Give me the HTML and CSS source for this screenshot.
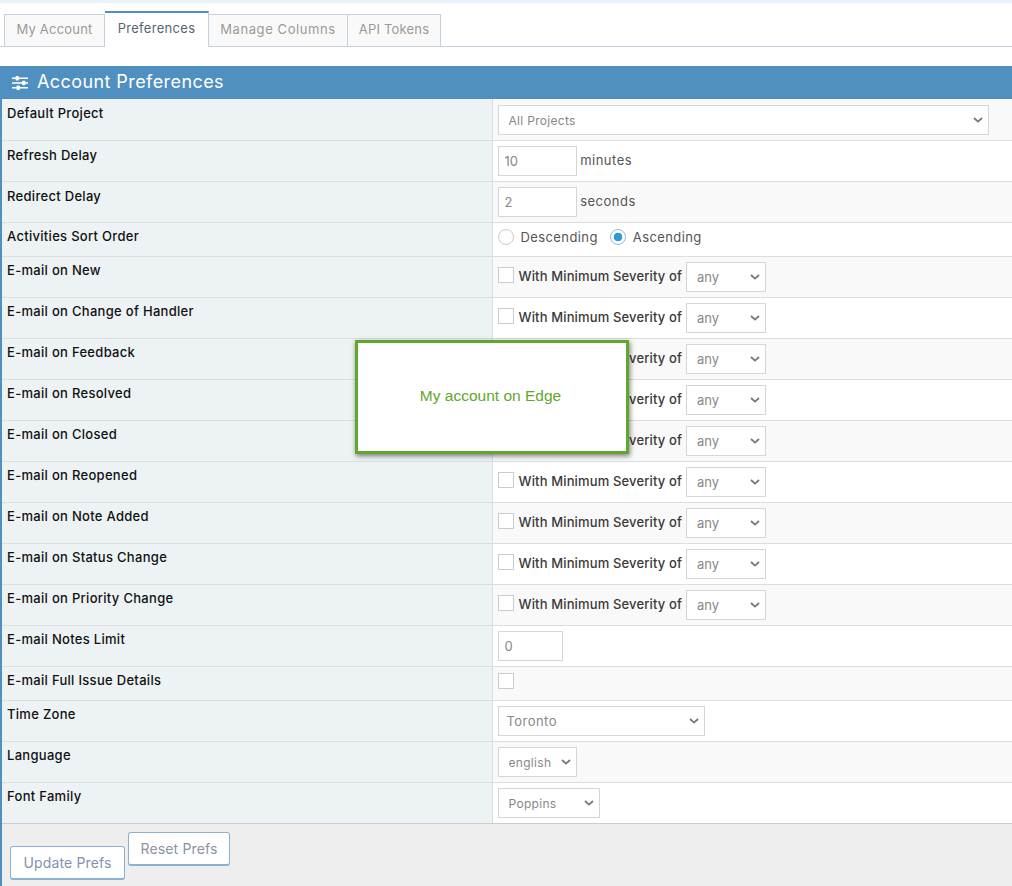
FILE: index.html
```html
<!DOCTYPE html>
<html lang="en">
<head>
    <meta charset="UTF-8">
    <meta name="viewport" content="width=device-width, initial-scale=1.0">
    <title>Account Preferences</title>
    <link rel="stylesheet" href="styles.css">
</head>
<body>
    <div class="top-strip"></div>

    <ul class="tabs">
        <li class="tab"><a href="#">My Account</a></li>
        <li class="tab active"><a href="#">Preferences</a></li>
        <li class="tab"><a href="#">Manage Columns</a></li>
        <li class="tab"><a href="#">API Tokens</a></li>
    </ul>

    <div class="widget">
        <h4 class="widget-title">
            <svg class="title-icon" width="16" height="14" viewBox="0 0 16 14">
                <path d="M0 1.5h16v1.6H0zM0 6.2h16v1.6H0zM0 10.9h16v1.6H0z" fill="#fff"/>
                <rect x="3.5" y="0" width="3.4" height="4.6" rx="1" fill="#fff"/>
                <rect x="10" y="4.7" width="3.4" height="4.6" rx="1" fill="#fff"/>
                <rect x="4.5" y="9.4" width="3.4" height="4.6" rx="1" fill="#fff"/>
            </svg>
            Account Preferences
        </h4>

        <table class="prefs">
            <tr class="first low">
                <th>Default Project</th>
                <td><select class="field wide"><option>All Projects</option></select></td>
            </tr>
            <tr class="low">
                <th>Refresh Delay</th>
                <td><input class="field num" type="text" value="10"> <span class="unit">minutes</span></td>
            </tr>
            <tr class="low">
                <th>Redirect Delay</th>
                <td><input class="field num" type="text" value="2"> <span class="unit">seconds</span></td>
            </tr>
            <tr class="short">
                <th>Activities Sort Order</th>
                <td class="radios">
                    <span class="radio"></span><span class="radio-label">Descending</span>
                    <span class="radio checked"></span><span class="radio-label">Ascending</span>
                </td>
            </tr>
            <tr>
                <th>E-mail on New</th>
                <td><span class="check"></span><b class="sev">With Minimum Severity of</b><select class="field any"><option>any</option></select></td>
            </tr>
            <tr>
                <th>E-mail on Change of Handler</th>
                <td><span class="check"></span><b class="sev">With Minimum Severity of</b><select class="field any"><option>any</option></select></td>
            </tr>
            <tr>
                <th>E-mail on Feedback</th>
                <td><span class="check"></span><b class="sev">With Minimum Severity of</b><select class="field any"><option>any</option></select></td>
            </tr>
            <tr>
                <th>E-mail on Resolved</th>
                <td><span class="check"></span><b class="sev">With Minimum Severity of</b><select class="field any"><option>any</option></select></td>
            </tr>
            <tr>
                <th>E-mail on Closed</th>
                <td><span class="check"></span><b class="sev">With Minimum Severity of</b><select class="field any"><option>any</option></select></td>
            </tr>
            <tr>
                <th>E-mail on Reopened</th>
                <td><span class="check"></span><b class="sev">With Minimum Severity of</b><select class="field any"><option>any</option></select></td>
            </tr>
            <tr>
                <th>E-mail on Note Added</th>
                <td><span class="check"></span><b class="sev">With Minimum Severity of</b><select class="field any"><option>any</option></select></td>
            </tr>
            <tr>
                <th>E-mail on Status Change</th>
                <td><span class="check"></span><b class="sev">With Minimum Severity of</b><select class="field any"><option>any</option></select></td>
            </tr>
            <tr>
                <th>E-mail on Priority Change</th>
                <td><span class="check"></span><b class="sev">With Minimum Severity of</b><select class="field any"><option>any</option></select></td>
            </tr>
            <tr>
                <th>E-mail Notes Limit</th>
                <td><input class="field limit" type="text" value="0"></td>
            </tr>
            <tr class="short">
                <th>E-mail Full Issue Details</th>
                <td><span class="check"></span></td>
            </tr>
            <tr>
                <th>Time Zone</th>
                <td><select class="field zone"><option>Toronto</option></select></td>
            </tr>
            <tr>
                <th>Language</th>
                <td><select class="field lang"><option>english</option></select></td>
            </tr>
            <tr>
                <th>Font Family</th>
                <td><select class="field font"><option>Poppins</option></select></td>
            </tr>
        </table>

        <div class="widget-footer">
            <button class="btn update">Update Prefs</button>
            <button class="btn reset">Reset Prefs</button>
        </div>
    </div>

    <div class="note">My account on Edge</div>
</body>
</html>
```

FILE: styles.css
```css
/* Global Styles */
html, body {
    margin: 0;
    padding: 0;
}

body {
    position: relative;
    height: 886px;
    overflow: hidden;
    background-color: #fff;
    font-family: 'Inter', 'Noto Sans', sans-serif;
    font-size: 13px;
    color: #393939;
}

.top-strip {
    height: 3px;
    background-color: #e8f4fa;
}

/* Tabs */
.tabs {
    display: flex;
    align-items: flex-end;
    height: 43px;
    margin: 0;
    padding: 0 0 0 4px;
    list-style: none;
    border-bottom: 1px solid #c5d0dc;
}

.tab {
    height: 33px;
    margin-bottom: -1px;
    background-color: #f9f9f9;
    border: 1px solid #c5d0dc;
    border-left: 0;
    box-sizing: border-box;
}

.tab:first-child {
    border-left: 1px solid #c5d0dc;
    width: 101px;
}

.tab:nth-child(2) { width: 104px; }
.tab:nth-child(3) { width: 139px; }
.tab:nth-child(4) { width: 93px; }

.tab a {
    display: block;
    line-height: 29px;
    text-align: center;
    color: #999;
    letter-spacing: 0.2px;
    text-decoration: none;
}

.tab:nth-child(3) a {
    letter-spacing: 0.6px;
}

.tab.active {
    height: 36px;
    background-color: #fff;
    border-top: 2px solid #4f8fc3;
    border-bottom-color: #fff;
}

.tab.active a {
    color: #576373;
    line-height: 31px;
    letter-spacing: 0.3px;
}

/* Widget */
.widget {
    margin-top: 19px;
    border-left: 2px solid #5090c1;
    box-sizing: border-box;
}

.widget-title {
    display: flex;
    align-items: center;
    gap: 9px;
    height: 33px;
    margin: 0 0 0 -1px;
    padding: 0 0 2px 11px;
    box-sizing: border-box;
    background-color: #5090c1;
    color: #fff;
    font-size: 18px;
    font-weight: 400;
    letter-spacing: 0.42px;
}

.title-icon {
    margin-top: 2px;
}

/* Preferences table */
.prefs {
    width: 100%;
    border-collapse: collapse;
    table-layout: fixed;
}

.prefs tr {
    height: 41px;
    border-bottom: 1px solid #ddd;
}

.prefs tr.short {
    height: 34px;
}

.prefs th {
    width: 490px;
    box-sizing: border-box;
    padding: 5px 5px 0;
    vertical-align: top;
    text-align: left;
    font-size: 13px;
    font-weight: 500;
    letter-spacing: 0.3px;
    color: #111;
    background-color: #edf3f4;
    border-right: 1px solid #ddd;
}

.prefs tr.low th {
    padding-top: 6px;
}

.prefs td {
    height: 40px;
    box-sizing: border-box;
    padding: 0 0 0 5px;
    white-space: nowrap;
}

.prefs tr.first td {
    padding-top: 2px;
}

.prefs tr.short td {
    height: 33px;
    padding-bottom: 2px;
}

.prefs tr.short td.radios {
    padding-bottom: 4px;
}

.prefs tr:nth-child(even) td {
    background-color: #fff;
}

.prefs tr:nth-child(odd) td {
    background-color: #f9f9f9;
}

.field {
    height: 30px;
    box-sizing: border-box;
    padding: 0 6px;
    border: 1px solid #d5d5d5;
    background-color: #fff;
    font-family: inherit;
    font-size: 12px;
    color: #888;
    vertical-align: middle;
}

select.field {
    appearance: none;
    -webkit-appearance: none;
    padding: 1px 0 0 10px;
    letter-spacing: 0.3px;
    background-image: url("data:image/svg+xml;utf8,<svg xmlns='http://www.w3.org/2000/svg' width='10' height='6'><path d='M1 1l4 3.6L9 1' fill='none' stroke='%23777' stroke-width='1.8'/></svg>");
    background-repeat: no-repeat;
    background-position: right 5px center;
}

.wide { width: 491px; }
.num { width: 79px; font-size: 13px; }
.limit { width: 65px; font-size: 13px; }
select.any { width: 80px; margin-left: 4px; font-size: 13px; letter-spacing: 0; }
select.zone { width: 207px; font-size: 13px; padding-left: 8px; letter-spacing: 0.45px; }
.lang { width: 79px; }
.font { width: 102px; }

.unit {
    color: #555;
    letter-spacing: 0.5px;
}

/* Radios and checks */
.radios {
    display: flex;
    align-items: center;
}

.radio {
    width: 16px;
    height: 16px;
    border: 1px solid #ccc;
    border-radius: 50%;
    box-sizing: border-box;
    background-color: #fff;
    margin-right: 7px;
}

.radio-label {
    margin-right: 12px;
    color: #555;
    letter-spacing: 0.4px;
}

.radio.checked {
    border-color: #9db8cc;
    background: radial-gradient(circle, #2d9bd2 0 4px, #fff 4.6px);
}

.check {
    display: inline-block;
    width: 16px;
    height: 16px;
    border: 1px solid #ccc;
    box-sizing: border-box;
    background-color: #fff;
    vertical-align: middle;
    position: relative;
    top: -2px;
}

.sev {
    margin-left: 5px;
    font-weight: 500;
    letter-spacing: 0.14px;
    color: #393939;
    vertical-align: middle;
    position: relative;
    top: -1px;
}

/* Footer buttons */
.widget-footer {
    display: flex;
    height: 63px;
    padding: 8px 0 0 8px;
    background-color: #eee;
    box-sizing: border-box;
    gap: 3px;
    border-top: 1px solid #ccc;
    margin-top: -1px;
}

.btn {
    height: 34px;
    padding: 0;
    background-color: #fff;
    border: 1px solid #8ab2d6;
    border-bottom-width: 2px;
    border-radius: 3px;
    font-family: inherit;
    font-size: 14px;
    letter-spacing: 0.15px;
    color: #7f93ad;
}

.update {
    width: 115px;
    margin-top: 14px;
}

.reset {
    width: 102px;
    color: #8a93a3;
}

/* Floating note */
.note {
    position: absolute;
    left: 355px;
    top: 340px;
    width: 274px;
    height: 114px;
    box-sizing: border-box;
    display: flex;
    align-items: center;
    justify-content: center;
    padding: 0 3px 2px 0;
    background-color: #fff;
    border: 3px solid #62a72d;
    box-shadow: 1px 2px 5px rgba(0, 0, 0, 0.5);
    font-family: 'Liberation Sans', Arial, sans-serif;
    font-size: 15.5px;
    color: #62a72d;
}
```
